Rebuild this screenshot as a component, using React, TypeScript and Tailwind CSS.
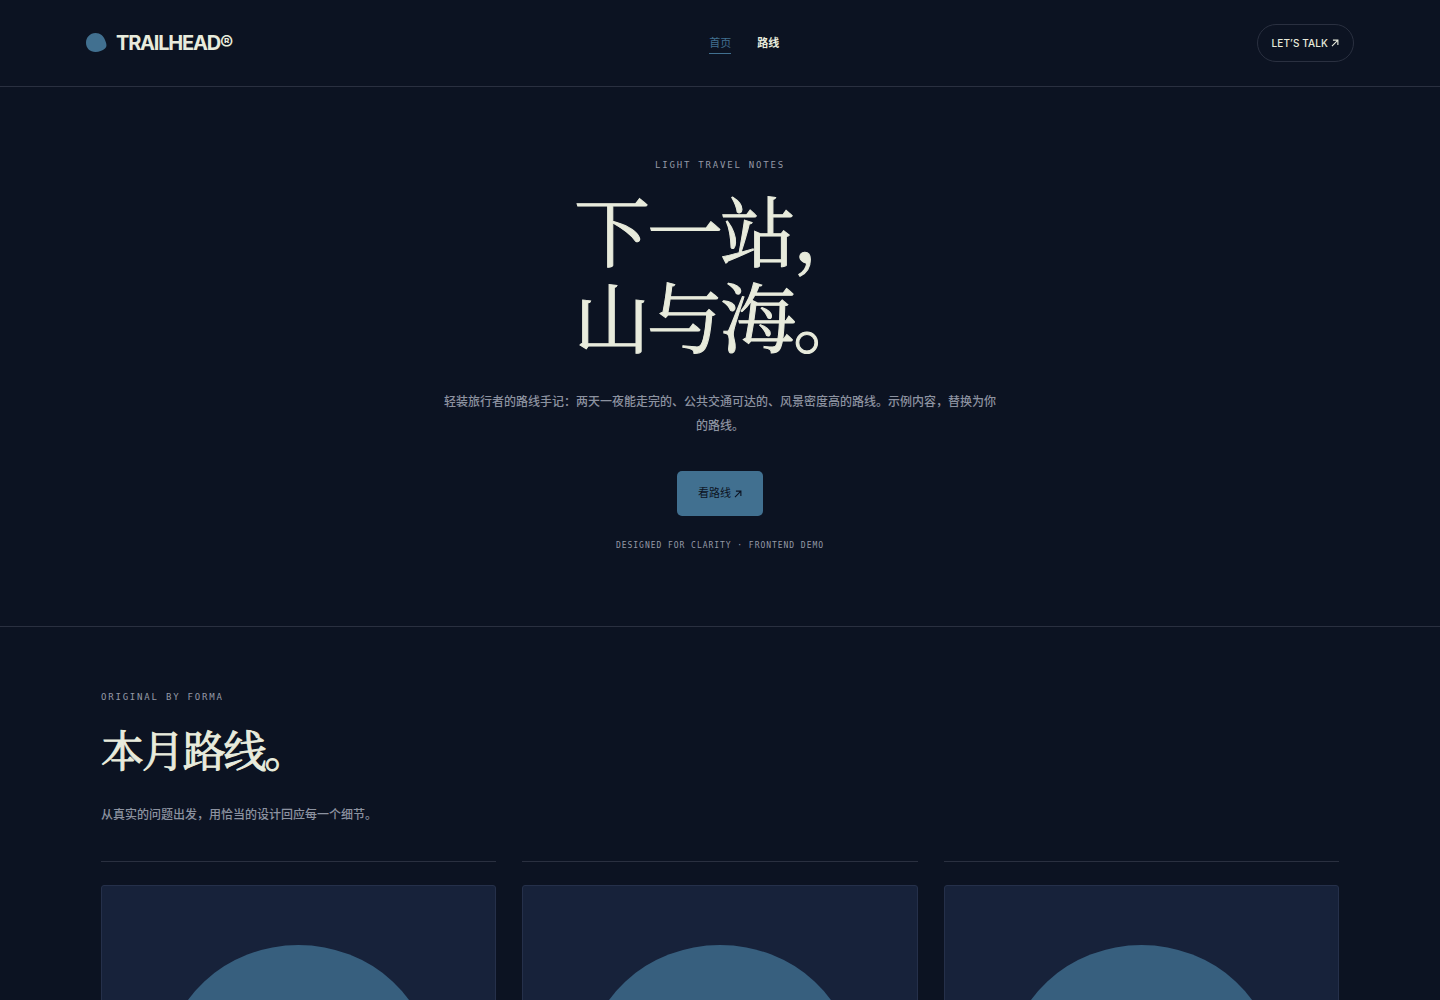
const sans = "font-['Inter','Noto_Sans_CJK_SC',sans-serif]";
const serif = "font-['Noto_Serif_CJK_SC','Noto_Serif_SC','Source_Han_Serif_SC',serif] [-webkit-text-stroke:1px_currentColor]";
const mono = "font-['DejaVu_Sans_Mono',monospace]";

const routes = ["one", "two", "three"];

function Arrow() {
  return (
    <svg viewBox="0 0 10 10" className="size-2" fill="none" stroke="currentColor" strokeWidth="1.4" aria-hidden="true">
      <path d="M1.2 8.8 8.6 1.4M2.4 1.4h6.2v6.2" />
    </svg>
  );
}

function Header() {
  return (
    <header className="border-b border-[#2a3040] px-[86px] py-6">
      <div className="flex items-center justify-between">
        <a href="#" className="flex items-center gap-[9px] text-xl font-bold tracking-[-0.06em]">
          <svg viewBox="0 0 21 20" className="h-5 w-[21px]" fill="#417090" aria-hidden="true">
            <path d="M9.5 0C14.5 0 17.5 3 19 7C20.5 10.5 21.3 13.5 19 15.5C16.5 17.5 13 19 9.5 19C4 19 0 15 0 9.7C0 4.5 4 0 9.5 0Z" />
          </svg>
          TRAILHEAD®
        </a>
        <nav className="flex gap-[26px] text-[11px] leading-5">
          <a href="#" className="border-b border-[#417090] text-[#417090]">首页</a>
          <a href="#routes" className="font-bold">路线</a>
        </nav>
        <button type="button" className="flex h-[38px] items-center gap-[3px] rounded-full border border-[#2a3040] px-[14px] text-[10px] font-medium tracking-[0.01em]">
          LET’S TALK <Arrow />
        </button>
      </div>
    </header>
  );
}

function Hero() {
  return (
    <section className="flex flex-col items-center border-b border-[#2a3040] px-6 pt-[72px] pb-[74px] text-center">
      <p className={`${mono} text-[9px] leading-3 tracking-[0.2em] text-[#9499a6]`}>LIGHT TRAVEL NOTES</p>
      <h1 className={`${serif} mt-[15px] text-left text-[76px] leading-[86px] tracking-[-0.04em]`}>
        下一站，
        <br />
        山与海。
      </h1>
      <p className="mt-8 max-w-[560px] text-xs leading-6 font-medium text-[#8c92a0]">
        轻装旅行者的路线手记：两天一夜能走完的、公共交通可达的、风景密度高的路线。示例内容，替换为你的路线。
      </p>
      <a href="#routes" className="mt-[33px] flex h-[45px] items-center gap-[3px] rounded-[5px] bg-[#417090] px-[21px] text-[11px] text-[#0c1322]">
        看路线 <Arrow />
      </a>
      <p className={`${mono} mt-6 text-[8px] leading-3 tracking-[0.12em] text-[#9499a6]`}>
        DESIGNED FOR CLARITY · FRONTEND DEMO
      </p>
    </section>
  );
}

function Routes() {
  return (
    <section id="routes" className="px-[101px] pt-16">
      <p className={`${mono} text-[9px] leading-3 tracking-[0.2em] text-[#9499a6]`}>ORIGINAL BY FORMA</p>
      <h2 className={`${serif} mt-[18px] text-[43px] leading-[56px] tracking-[-0.05em]`}>本月路线。</h2>
      <p className="mt-[26px] text-xs leading-6 font-medium text-[#8c92a0]">从真实的问题出发，用恰当的设计回应每一个细节。</p>
      <div className="mt-[34px] grid grid-cols-3 gap-[26px]">
        {routes.map((route) => (
          <article key={route} className="border-t border-[#2a3040] pt-[23px]">
            <div className="flex aspect-[16/15] items-center justify-center overflow-hidden rounded-[3px] border border-[#25304a] bg-[#17223a]">
              <div className="h-[68%] w-[68%] rounded-[50%] bg-[#375f7e]" />
            </div>
          </article>
        ))}
      </div>
    </section>
  );
}

export default function App() {
  return (
    <div className={`${sans} h-screen overflow-hidden bg-[#0c1322] text-[#e8ebdc]`}>
      <Header />
      <main>
        <Hero />
        <Routes />
      </main>
    </div>
  );
}
